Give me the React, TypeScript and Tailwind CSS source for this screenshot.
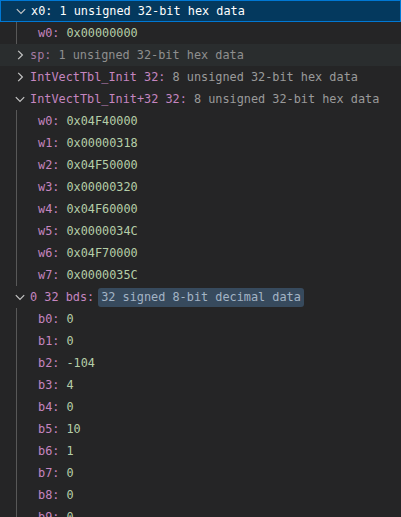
import type { ReactNode } from "react"

type Child = { name: string; value: string }

const vectWords: Child[] = [
  { name: "w0", value: "0x04F40000" },
  { name: "w1", value: "0x00000318" },
  { name: "w2", value: "0x04F50000" },
  { name: "w3", value: "0x00000320" },
  { name: "w4", value: "0x04F60000" },
  { name: "w5", value: "0x0000034C" },
  { name: "w6", value: "0x04F70000" },
  { name: "w7", value: "0x0000035C" },
]

const bytes: Child[] = ["0", "0", "-104", "4", "0", "10", "1", "0", "0", "0"].map((v, i) => ({
  name: `b${i}`,
  value: v,
}))

function Chevron({ open }: { open: boolean }) {
  return (
    <svg width="16" height="16" viewBox="0 0 16 16" fill="none" stroke="#c5c5c5" strokeWidth="1.2">
      {open ? <path d="M3.8 6.2 8 10.4l4.2-4.2" /> : <path d="M6.2 3.8 10.4 8l-4.2 4.2" />}
    </svg>
  )
}

function Parent({
  open,
  name,
  children,
  selected,
  hover,
  dim,
}: {
  open: boolean
  name: string
  children: ReactNode
  selected?: boolean
  hover?: boolean
  dim?: boolean
}) {
  return (
    <div
      className={`flex h-[22px] items-center pl-[12px] whitespace-nowrap ${
        selected ? "bg-[#04395e] border border-[#0078d4] pl-[11px]" : hover ? "bg-[#2a2d2e]" : ""
      }`}
    >
      <span className="flex w-[16px] items-center justify-center">
        <Chevron open={open} />
      </span>
      <span className="ml-[2px] flex items-center">
        <span className={selected ? "text-white" : dim ? "text-[#a57aa2]" : "text-[#c586c0]"}>{name}:</span>
        <span className="ml-[7px] flex items-center">{children}</span>
      </span>
    </div>
  )
}

function Leaf({ item }: { item: Child }) {
  return (
    <div className="flex h-[22px] items-center pl-[21px] whitespace-nowrap">
      <span className="text-[#c586c0]">{item.name}:</span>
      <span className="ml-[7px] text-[#b5cea8]">{item.value}</span>
    </div>
  )
}

function Group({ items }: { items: Child[] }) {
  return (
    <div className="ml-[16px] border-l border-[#585858]">
      {items.map((it, i) => (
        <Leaf key={i} item={it} />
      ))}
    </div>
  )
}

export default function App() {
  return (
    <div
      className="h-[517px] w-[401px] overflow-hidden bg-[#252526] text-[11.85px] leading-[22px]"
      style={{ fontFamily: '"DejaVu Sans Mono", "Liberation Mono", monospace' }}
    >
      <Parent open selected name="x0">
        <span className="text-white">1 unsigned 32-bit hex data</span>
      </Parent>
      <Group items={[{ name: "w0", value: "0x00000000" }]} />
      <Parent open={false} hover dim name="sp">
        <span className="text-[#8f8f8f]">1 unsigned 32-bit hex data</span>
      </Parent>
      <Parent open={false} name="IntVectTbl_Init 32">
        <span className="text-[#9a9a9a]">8 unsigned 32-bit hex data</span>
      </Parent>
      <Parent open name="IntVectTbl_Init+32 32">
        <span className="text-[#9a9a9a]">8 unsigned 32-bit hex data</span>
      </Parent>
      <Group items={vectWords} />
      <Parent open name="0 32 bds">
        <span className="-ml-[3px] flex h-[19px] items-center rounded-[3px] bg-[#374a5d] px-[3px] text-[#a3b4c5]">
          32 signed 8-bit decimal data
        </span>
      </Parent>
      <Group items={bytes} />
    </div>
  )
}
